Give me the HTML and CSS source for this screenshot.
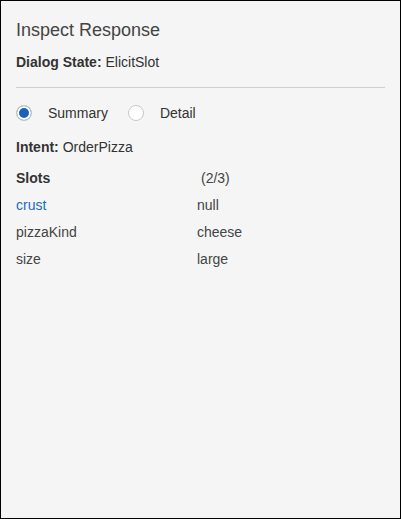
FILE: index.html
```html
<!DOCTYPE html>
<html>
<head>
<meta charset="utf-8">
<link rel="stylesheet" href="styles.css">
</head>
<body>
<div class="panel">
  <h1 class="title">Inspect Response</h1>
  <div class="field"><span class="label">Dialog State:</span> ElicitSlot</div>
  <hr class="divider">
  <div class="radios">
    <label class="radio"><span class="dot checked"></span><span>Summary</span></label>
    <label class="radio"><span class="dot"></span><span>Detail</span></label>
  </div>
  <div class="field intent"><span class="label">Intent:</span> OrderPizza</div>
  <div class="slots">
    <div class="head">Slots</div><div class="count">(2/3)</div>
    <div class="link">crust</div><div class="val">null</div>
    <div class="name">pizzaKind</div><div class="val">cheese</div>
    <div class="name">size</div><div class="val">large</div>
  </div>
</div>
</body>
</html>
```
FILE: styles.css
```css
html, body { margin: 0; padding: 0; }
body { font-family: "Liberation Sans", Arial, sans-serif; color: #333; }
.panel {
  box-sizing: border-box;
  width: 401px;
  height: 519px;
  border: 1px solid #000;
  background: #f5f5f5;
  padding: 17px 15px 0 15px;
}
.title {
  margin: 0;
  font-size: 18px;
  font-weight: normal;
  line-height: 24px;
  color: #444;
}
.field { font-size: 14px; line-height: 16px; margin-top: 12px; }
.label { font-weight: bold; }
.divider {
  border: 0;
  border-top: 1px solid #cfcfcf;
  margin: 17px 0 0 0;
  height: 0;
}
.radios { display: flex; gap: 20px; margin-top: 17px; font-size: 14px; line-height: 16px; }
.radio { display: flex; align-items: center; gap: 16px; }
.dot {
  box-sizing: border-box;
  width: 16px; height: 16px;
  border-radius: 50%;
  border: 1px solid #c8c8c8;
  background: #fff;
}
.dot.checked { background: #1a62b8; box-shadow: inset 0 0 0 2px #fff; }
.intent { margin-top: 18px; }
.slots {
  display: grid;
  grid-template-columns: 181px auto;
  grid-auto-rows: 27px;
  align-items: center;
  margin-top: 9px;
  font-size: 14px;
  color: #444;
}
.head { font-weight: bold; color: #333; }
.count { padding-left: 4px; }
.link { color: #1a6bc0; }
```
